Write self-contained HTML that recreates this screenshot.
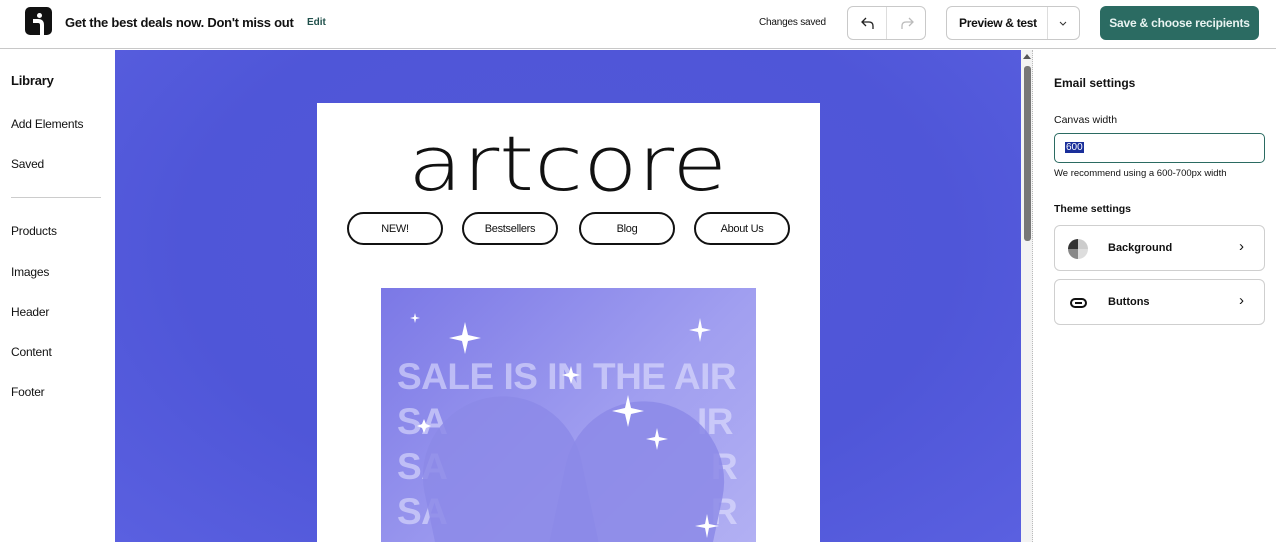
<!DOCTYPE html>
<html><head><meta charset="utf-8"><style>
*{box-sizing:border-box;margin:0;padding:0}
body{width:1276px;height:542px;overflow:hidden;font-family:"Liberation Sans",sans-serif;background:#fff;position:relative;color:#111}
.abs{position:absolute}
.hdr{left:0;top:0;width:1276px;height:49px;border-bottom:1px solid #c8c8c8;background:#fff}
.btn{position:absolute;border:1px solid #c9c9c9;border-radius:6px;background:#fff}
.side a{position:absolute;left:11px;font-size:12px;color:#111;letter-spacing:-0.2px}
.pill{position:absolute;top:212px;height:33px;width:96px;border:2px solid #111;border-radius:17px;font-size:11px;text-align:center;line-height:31px;color:#111;letter-spacing:-0.3px}
.card{position:absolute;left:1054px;width:211px;border:1px solid #cfcfcf;border-radius:6px;background:#fff;height:46px}
.card b{position:absolute;left:53px;top:16px;font-size:11px}
.card i{position:absolute;right:20px;top:12px;font-style:normal;font-size:15px}
.sale{position:absolute;font-size:37px;font-weight:bold;color:rgba(232,232,255,.55);letter-spacing:-0.5px;white-space:nowrap}
</style></head><body>
<div class="abs hdr">
  <div class="abs" style="left:25px;top:7px;width:27px;height:28px;background:#111;border-radius:5px">
    <div class="abs" style="left:12px;top:6px;width:5px;height:5px;border-radius:50%;background:#fff"></div>
    <svg class="abs" style="left:0;top:0" width="27" height="28"><path d="M8 14 H13 Q17 14 17 18 V28" stroke="#fff" stroke-width="4" fill="none"/></svg>
  </div>
  <div class="abs" style="left:65px;top:15px;font-size:13px;font-weight:bold;letter-spacing:-0.25px">Get the best deals now. Don't miss out</div>
  <div class="abs" style="left:307px;top:17px;font-size:10px;font-weight:bold;color:#1f4f4a">Edit</div>
  <div class="abs" style="left:759px;top:17px;font-size:10px;letter-spacing:-0.2px">Changes saved</div>
  <div class="btn" style="left:847px;top:6px;width:79px;height:34px"><div class="abs" style="left:38px;top:0;width:1px;height:32px;background:#ddd"></div>
    <svg class="abs" style="left:13px;top:10px" width="14" height="12"><path d="M5 1 L1 5 L5 9 M1 5 H8 Q12 5 12 9 V12" stroke="#222" stroke-width="1.3" fill="none"/></svg>
    <svg class="abs" style="left:52px;top:10px" width="14" height="12"><path d="M9 1 L13 5 L9 9 M13 5 H6 Q2 5 2 9 V12" stroke="#bbb" stroke-width="1.3" fill="none"/></svg></div>
  <div class="btn" style="left:946px;top:6px;width:134px;height:34px"><div class="abs" style="left:100px;top:0;width:1px;height:32px;background:#ddd"></div>
    <span class="abs" style="left:12px;top:9px;font-size:12px;font-weight:bold;letter-spacing:-0.3px">Preview &amp; test</span>
    <svg class="abs" style="left:112px;top:14px" width="8" height="5"><path d="M1 1 L4 4 L7 1" stroke="#333" fill="none"/></svg></div>
  <div class="abs" style="left:1100px;top:6px;width:159px;height:34px;background:#2b6b62;border-radius:6px;color:#e8f3f1;font-size:12px;font-weight:bold;text-align:center;line-height:34px;letter-spacing:-0.2px">Save &amp; choose recipients</div>
</div>
<div class="side">
  <a style="top:73px;font-size:13px;font-weight:bold">Library</a>
  <a style="top:117px">Add Elements</a>
  <a style="top:157px">Saved</a>
  <div class="abs" style="left:11px;top:197px;width:90px;height:1px;background:#ccc"></div>
  <a style="top:224px">Products</a>
  <a style="top:265px">Images</a>
  <a style="top:305px">Header</a>
  <a style="top:345px">Content</a>
  <a style="top:385px">Footer</a>
</div>
<div class="abs" style="left:115px;top:50px;width:906px;height:492px;background:radial-gradient(ellipse at 50% 40%,#5258d6,#4f56d8 60%,#5a60e0)"></div>
<div class="abs" style="left:1021px;top:50px;width:12px;height:492px;background:#f3f3f3;border-right:1px dotted #bbb"></div>
<div class="abs" style="left:1024px;top:66px;width:7px;height:175px;background:#777;border-radius:3px"></div>
<div class="abs" style="left:1023px;top:54px;width:0;height:0;border:4px solid transparent;border-bottom:5px solid #555;border-top:0"></div>
<div class="abs" style="left:317px;top:103px;width:503px;height:439px;background:#fff">
  <svg class="abs" style="left:0;top:20px" width="503" height="80"><text x="91" y="67" font-family="DejaVu Sans ExtraLight, DejaVu Sans, Liberation Sans" font-size="76" font-weight="200" fill="#111" textLength="319" lengthAdjust="spacingAndGlyphs">artcore</text></svg>
</div>
<div class="pill" style="left:347px">NEW!</div>
<div class="pill" style="left:462px">Bestsellers</div>
<div class="pill" style="left:579px">Blog</div>
<div class="pill" style="left:694px">About Us</div>
<div class="abs" style="left:381px;top:288px;width:375px;height:254px;background:linear-gradient(135deg,#7b78e6,#a19ff0 60%,#b2b0f3);overflow:hidden">
  <div class="sale" style="left:16px;top:68px">SALE IS IN THE AIR</div>
  <div class="sale" style="left:16px;top:113px">SA</div><div class="sale" style="left:316px;top:113px">IR</div>
  <div class="sale" style="left:16px;top:158px">SA</div><div class="sale" style="left:330px;top:158px">R</div>
  <div class="sale" style="left:16px;top:203px">SA</div><div class="sale" style="left:330px;top:203px">R</div>
  <div class="abs" style="left:45px;top:108px;width:160px;height:190px;border-radius:80px 80px 30px 30px;background:rgba(140,138,232,.85);transform:rotate(-12deg)"></div>
  <div class="abs" style="left:180px;top:113px;width:160px;height:190px;border-radius:80px 80px 30px 30px;background:rgba(140,138,232,.85);transform:rotate(12deg)"></div>
  <svg class="abs" style="left:0;top:0" width="375" height="254" fill="#fff">
    <path d="M84 34 L87 47 L100 50 L87 53 L84 66 L81 53 L68 50 L81 47Z"/>
    <path d="M247 107 L250 120 L263 123 L250 126 L247 139 L244 126 L231 123 L244 120Z"/>
    <path d="M319 30 L321 40 L330 42 L321 44 L319 54 L317 44 L308 42 L317 40Z"/>
    <path d="M276 140 L278 149 L287 151 L278 153 L276 162 L274 153 L265 151 L274 149Z"/>
    <path d="M190 78 L192 85 L199 87 L192 89 L190 96 L188 89 L181 87 L188 85Z"/>
    <path d="M326 226 L328 236 L338 238 L328 240 L326 250 L324 240 L314 238 L324 236Z"/>
    <path d="M34 25 L35 29 L39 30 L35 31 L34 35 L33 31 L29 30 L33 29Z"/>
    <path d="M43 131 L45 136 L50 138 L45 140 L43 145 L41 140 L36 138 L41 136Z"/>
  </svg>
</div>
<div class="abs" style="left:1054px;top:76px;font-size:12px;font-weight:bold">Email settings</div>
<div class="abs" style="left:1054px;top:114px;font-size:10.5px">Canvas width</div>
<div class="abs" style="left:1054px;top:133px;width:211px;height:30px;border:1px solid #2b6b62;border-radius:5px"><span class="abs" style="left:10px;top:8px;font-size:10px;background:#1a2f9a;color:#fff;padding:0 1px">600</span></div>
<div class="abs" style="left:1054px;top:168px;font-size:9.5px">We recommend using a 600-700px width</div>
<div class="abs" style="left:1054px;top:203px;font-size:10.5px;font-weight:bold">Theme settings</div>
<div class="card" style="top:225px"><div class="abs" style="left:13px;top:13px;width:20px;height:20px;border-radius:50%;background:conic-gradient(#ccc 0 25%,#ddd 25% 50%,#888 50% 75%,#333 75%)"></div><b>Background</b><i>›</i></div>
<div class="card" style="top:279px"><div class="abs" style="left:15px;top:18px;width:17px;height:10px;border:2px solid #111;border-radius:5px"><div style="margin:2px 3px;height:2px;background:#111"></div></div><b>Buttons</b><i>›</i></div>
</body></html>
